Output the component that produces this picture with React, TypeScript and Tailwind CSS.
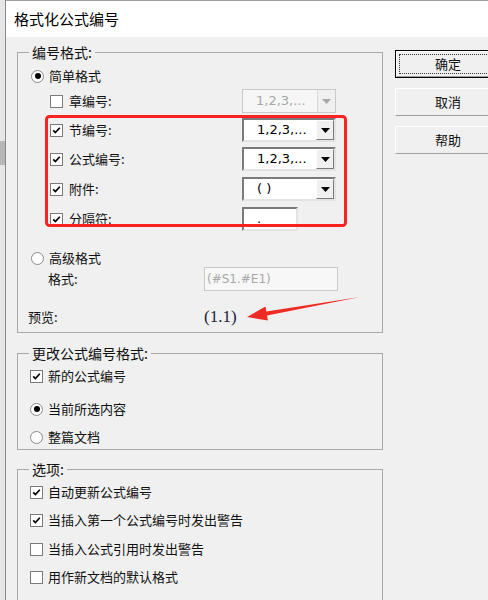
import React from 'react';

const Check = ({ checked }: { checked?: boolean }) => (
  <span className="flex h-[13px] w-[13px] shrink-0 items-center justify-center border border-[#7a7a7a] bg-white">
    {checked && (
      <svg width="9" height="9" viewBox="0 0 9 9">
        <path d="M1.2 4.3 L3.4 6.6 L7.8 1.8" stroke="#000" strokeWidth="1.7" fill="none" />
      </svg>
    )}
  </span>
);

const Radio = ({ selected }: { selected?: boolean }) => (
  <span className="flex h-[13px] w-[13px] shrink-0 items-center justify-center rounded-full border border-[#8a8a8a] bg-white">
    {selected && <span className="h-[6px] w-[6px] rounded-full bg-black" />}
  </span>
);

const Dropdown = ({ value, disabled }: { value: string; disabled?: boolean }) => (
  <div
    className={
      disabled
        ? 'flex h-6 w-[94px] shrink-0 border border-[#c9c9c9] bg-[#f6f6f6]'
        : 'flex h-6 w-[94px] shrink-0 border-2 border-t-[#7a7a7a] border-l-[#7a7a7a] border-r-[#e3e3e3] border-b-[#e3e3e3] bg-white'
    }
  >
    <span
      className={
        'flex flex-1 items-center pl-[13px] font-["DejaVu_Sans",sans-serif] text-[13px] ' +
        (disabled ? 'text-[#a8a8a8]' : 'text-black')
      }
    >
      {value}
    </span>
    <span
      className={
        disabled
          ? 'flex w-[18px] items-center justify-center border-l border-[#d8d8d8] bg-[#f0f0f0]'
          : 'flex w-[18px] items-center justify-center border border-t-white border-l-white border-r-[#7a7a7a] border-b-[#7a7a7a] bg-[#f0f0f0]'
      }
    >
      <svg width="9" height="5" viewBox="0 0 9 5">
        <path d="M0 0 H9 L4.5 5 Z" fill={disabled ? '#a8a8a8' : '#000'} />
      </svg>
    </span>
  </div>
);

const Button = ({ label, isDefault }: { label: string; isDefault?: boolean }) => (
  <div
    className={
      'flex h-[28px] w-[106px] items-center justify-center bg-[#f0f0f0] ' +
      (isDefault
        ? 'border border-black'
        : 'border border-t-white border-l-white border-r-[#a0a0a0] border-b-[#a0a0a0]')
    }
  >
    {isDefault ? (
      <div className="flex h-full w-full items-center justify-center border border-t-white border-l-white border-r-[#a0a0a0] border-b-[#a0a0a0] p-[2px]">
        <div className="flex h-full w-full items-center justify-center border border-dotted border-[#333]">
          {label}
        </div>
      </div>
    ) : (
      label
    )}
  </div>
);

const Group = ({ title, className, children }: { title: string; className?: string; children: React.ReactNode }) => (
  <fieldset className={'w-[366px] border border-[#a8a8a8] ' + (className ?? '')}>
    <legend className="ml-[11px] px-[3px] text-[14px] leading-[16px]">{title}</legend>
    {children}
  </fieldset>
);

export default function App() {
  return (
    <div className="relative flex h-[600px] w-[488px] overflow-hidden bg-[#e6e6e6] font-['Noto_Sans_CJK_SC',sans-serif] text-[13px] text-[#111]">
      <div className="flex w-[5px] shrink-0 flex-col">
        <div className="mt-[141px] h-[24px] bg-[#b6b6b6]" />
      </div>
      <div className="flex flex-1 flex-col border-l border-[#888]">
        <div className="flex h-[37px] shrink-0 items-center justify-between border-t border-[#a0a0a0] bg-white pl-[8px]">
          <span className="text-[15px] leading-[20px] text-black">格式化公式编号</span>
          <svg width="10" height="10" viewBox="0 0 10 10" className="mr-[-6px]">
            <path d="M0 0 L10 10 M10 0 L0 10" stroke="#333" strokeWidth="1" />
          </svg>
        </div>
        <div className="flex flex-1 gap-[12px] bg-[#f0f0f0] pl-[11px] pt-[7px]">
          <div className="flex shrink-0 flex-col">
            <Group title="编号格式:" className="pb-[5px]">
              <div className="flex flex-col pl-[13px]">
                <div className="mt-[6px] flex h-[20px] items-center gap-[5px] leading-[16px]">
                  <Radio selected />
                  <span>简单格式</span>
                </div>
                {[
                  { label: '章编号:', v: '1,2,3,...', on: false, dis: true, mt: 'mt-[3px]' },
                  { label: '节编号:', v: '1,2,3,...', on: true, mt: 'mt-[5px]' },
                  { label: '公式编号:', v: '1,2,3,...', on: true, mt: 'mt-[5px]' },
                  { label: '附件:', v: '( )', on: true, mt: 'mt-[6px]' },
                ].map((r) => (
                  <div key={r.label} className={'flex h-6 items-center ' + r.mt}>
                    <div className="flex w-[211px] shrink-0 items-center gap-[6px] pl-[19px] leading-[16px]">
                      <Check checked={r.on} />
                      <span>{r.label}</span>
                    </div>
                    <Dropdown value={r.v} disabled={r.dis} />
                  </div>
                ))}
                <div className="mt-[6px] flex h-6 items-center">
                  <div className="flex w-[211px] shrink-0 items-center gap-[6px] pl-[19px] leading-[16px]">
                    <Check checked />
                    <span>分隔符:</span>
                  </div>
                  <div className="flex h-6 w-[56px] shrink-0 items-center border-2 border-t-[#7a7a7a] border-l-[#7a7a7a] border-r-[#e3e3e3] border-b-[#e3e3e3] bg-white pl-[13px] font-['DejaVu_Sans',sans-serif] text-black">
                    .
                  </div>
                </div>
                <div className="mt-[19px] flex h-[16px] items-center gap-[5px] leading-[16px]">
                  <Radio />
                  <span>高级格式</span>
                </div>
                <div className="mt-[1px] flex h-6 items-center">
                  <div className="w-[173px] shrink-0 pl-[17px] leading-[16px]">格式:</div>
                  <div className="flex h-6 w-[134px] shrink-0 items-center border border-[#c9c9c9] bg-[#f7f7f7] pl-[2px] font-['DejaVu_Sans',sans-serif] text-[12px] text-[#a8a8a8]">
                    (#S1.#E1)
                  </div>
                </div>
                <div className="-ml-[3px] mt-[16px] flex h-[20px] items-center">
                  <div className="w-[176px] shrink-0 leading-[16px]">预览:</div>
                  <span className="font-['Liberation_Serif',serif] text-[17px] text-[#1c1c38]">(1.1)</span>
                </div>
              </div>
            </Group>
            <Group title="更改公式编号格式:" className="mt-[12px] pb-[4px]">
              <div className="flex flex-col pl-[12px] leading-[16px]">
                <div className="mt-[7px] flex h-[16px] items-center gap-[5px]">
                  <Check checked />
                  <span>新的公式编号</span>
                </div>
                <div className="mt-[17px] flex h-[16px] items-center gap-[5px]">
                  <Radio selected />
                  <span>当前所选内容</span>
                </div>
                <div className="mt-[12px] flex h-[16px] items-center gap-[5px]">
                  <Radio />
                  <span>整篇文档</span>
                </div>
              </div>
            </Group>
            <Group title="选项:" className="mt-[11px] pb-[40px]">
              <div className="flex flex-col pl-[12px] leading-[16px]">
                <div className="mt-[7px] flex h-[16px] items-center gap-[5px]">
                  <Check checked />
                  <span>自动更新公式编号</span>
                </div>
                <div className="mt-[12px] flex h-[16px] items-center gap-[5px]">
                  <Check checked />
                  <span>当插入第一个公式编号时发出警告</span>
                </div>
                <div className="mt-[13px] flex h-[16px] items-center gap-[5px]">
                  <Check />
                  <span>当插入公式引用时发出警告</span>
                </div>
                <div className="mt-[12px] flex h-[16px] items-center gap-[5px]">
                  <Check />
                  <span>用作新文档的默认格式</span>
                </div>
              </div>
            </Group>
          </div>
          <div className="flex shrink-0 flex-col gap-[10px] pt-[6px]">
            <Button label="确定" isDefault />
            <Button label="取消" />
            <Button label="帮助" />
          </div>
        </div>
      </div>
      {/* red annotation drawn over the dialog */}
      <svg className="pointer-events-none absolute left-0 top-0" width="488" height="600" viewBox="0 0 488 600">
        <rect x="46.5" y="116.5" width="299" height="109" rx="3" fill="none" stroke="#fb2222" strokeWidth="3" />
        <polygon
          points="247,317 265.5,306.6 266.4,311.5 360,297 267,315.5 267.9,320.4"
          fill="#ef2b25"
        />
      </svg>
    </div>
  );
}
